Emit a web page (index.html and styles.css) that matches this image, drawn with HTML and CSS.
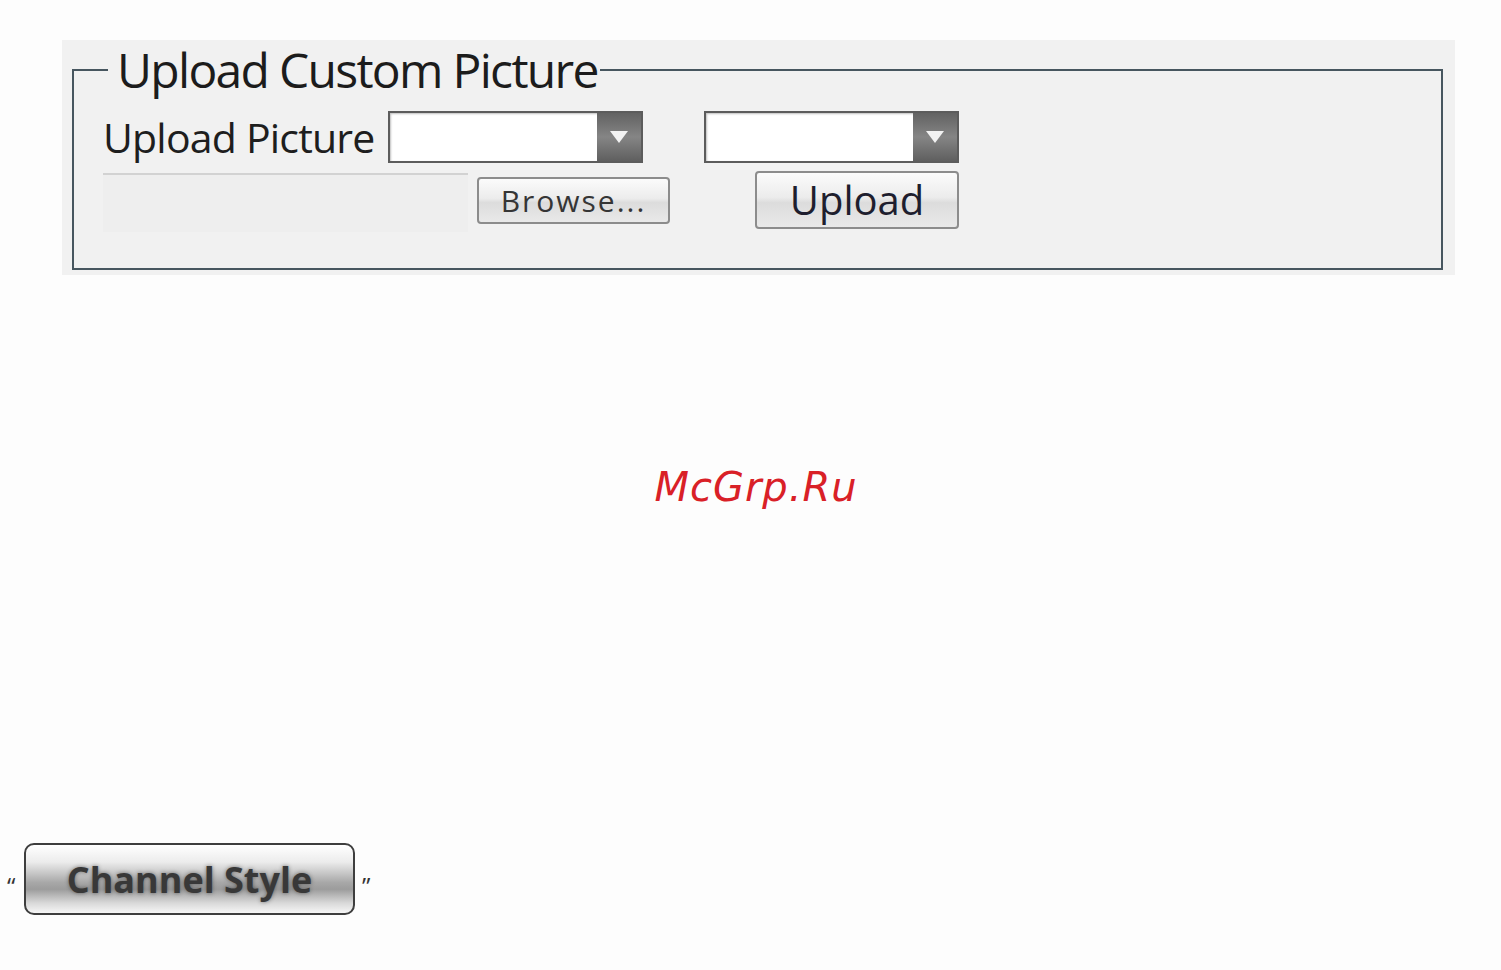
FILE: index.html
```html
<!DOCTYPE html>
<html lang="en">
<head>
    <meta charset="UTF-8">
    <title>Upload Custom Picture</title>
    <link rel="stylesheet" href="styles.css">
</head>
<body>

<!-- Painel de upload -->
<div class="panel">
    <fieldset class="box">
        <legend>Upload Custom Picture</legend>

        <div class="row row-select">
            <label class="label">Upload Picture</label>
            <div class="select">
                <div class="select-value"></div>
                <div class="select-arrow"><span class="tri"></span></div>
            </div>
            <div class="select select-2">
                <div class="select-value"></div>
                <div class="select-arrow"><span class="tri"></span></div>
            </div>
        </div>

        <div class="row row-file">
            <div class="file-field"></div>
            <button class="btn btn-browse">Browse...</button>
            <button class="btn btn-upload">Upload</button>
        </div>
    </fieldset>
</div>

<div class="watermark">McGrp.Ru</div>

<div class="channel-row">
    <span class="quote">&ldquo;</span>
    <button class="channel-btn">Channel Style</button>
    <span class="quote quote-r">&rdquo;</span>
</div>

</body>
</html>
```

FILE: styles.css
```css
body { margin: 0; background-color: #fdfdfd; font-family: "Open Sans", "DejaVu Sans", sans-serif; color: #222; }

.panel { margin: 40px 0 0 62px; width: 1393px; height: 235px; background-color: #f1f1f1; padding: 0 12px 0 10px; box-sizing: border-box; }
.box { margin: 0; height: 230px; box-sizing: border-box; border: 2px solid #47565f; padding: 0 0 0 29px; }
.box legend { font-size: 48px; line-height: 60px; padding: 0 2px 0 9px; margin-left: 5px; color: #1c1c1c; letter-spacing: -1.7px; }

.row { display: flex; align-items: flex-start; }
.row-select { margin-top: 11px; height: 52px; }
.label { width: 285px; flex-shrink: 0; white-space: nowrap; font-size: 41px; line-height: 52px; color: #1e1e1e; letter-spacing: -0.8px; }

.select { width: 255px; height: 52px; box-sizing: border-box; border: 2px solid #5c5c5c; display: flex; background-color: #fff; box-shadow: inset 1px 1px 2px rgba(0,0,0,0.25); }
.select-2 { margin-left: 61px; }
.select-value { flex: 1; }
.select-arrow { width: 44px; display: flex; align-items: center; justify-content: center; background: linear-gradient(to bottom, #626262, #858585 50%, #5f5f5f); }
.tri { width: 0; height: 0; border-left: 9px solid transparent; border-right: 9px solid transparent; border-top: 12px solid #f2f2f2; }

.row-file { margin-top: 8px; }
.file-field { width: 365px; height: 59px; margin-top: 2px; box-sizing: border-box; background-color: #eeeeee; border-top: 2px solid #d2d2d2; }

.btn { font-family: "Open Sans", "DejaVu Sans", sans-serif; box-sizing: border-box; border: 2px solid #8c8c8c; border-radius: 4px; background: linear-gradient(to bottom, #fbfbfb, #ececec 45%, #dcdcdc 55%, #e9e9e9); padding: 0; cursor: pointer; }
.btn-browse { margin: 6px 0 0 9px; width: 193px; height: 47px; font-size: 30px; line-height: 40px; color: #353535; letter-spacing: 2px; }
.btn-upload { margin-left: 85px; width: 204px; height: 58px; font-size: 40px; line-height: 52px; color: #1e1e2e; }

.watermark { margin-top: 188px; padding-left: 11px; text-align: center; font-family: "DejaVu Sans", sans-serif; font-style: italic; font-size: 40px; line-height: 48px; color: #d92027; letter-spacing: 1px; }

.channel-row { margin-top: 332px; display: flex; align-items: center; padding-left: 7px; }
.quote { font-size: 24px; line-height: 24px; color: #333; width: 17px; margin-top: 14px; }
.quote-r { margin-left: 7px; }
.channel-btn { width: 331px; height: 72px; box-sizing: border-box; border: 2px solid #3e3e3e; border-radius: 10px; background: linear-gradient(to bottom, #ffffff 0%, #ececec 25%, #a8a8a8 55%, #9c9c9c 65%, #d8d8d8 85%, #f6f6f6 100%); font-family: "Open Sans", "DejaVu Sans", sans-serif; font-weight: bold; font-size: 36px; color: #383838; text-shadow: 0 0 4px rgba(0,0,0,0.45); padding: 0; cursor: pointer; }
```
